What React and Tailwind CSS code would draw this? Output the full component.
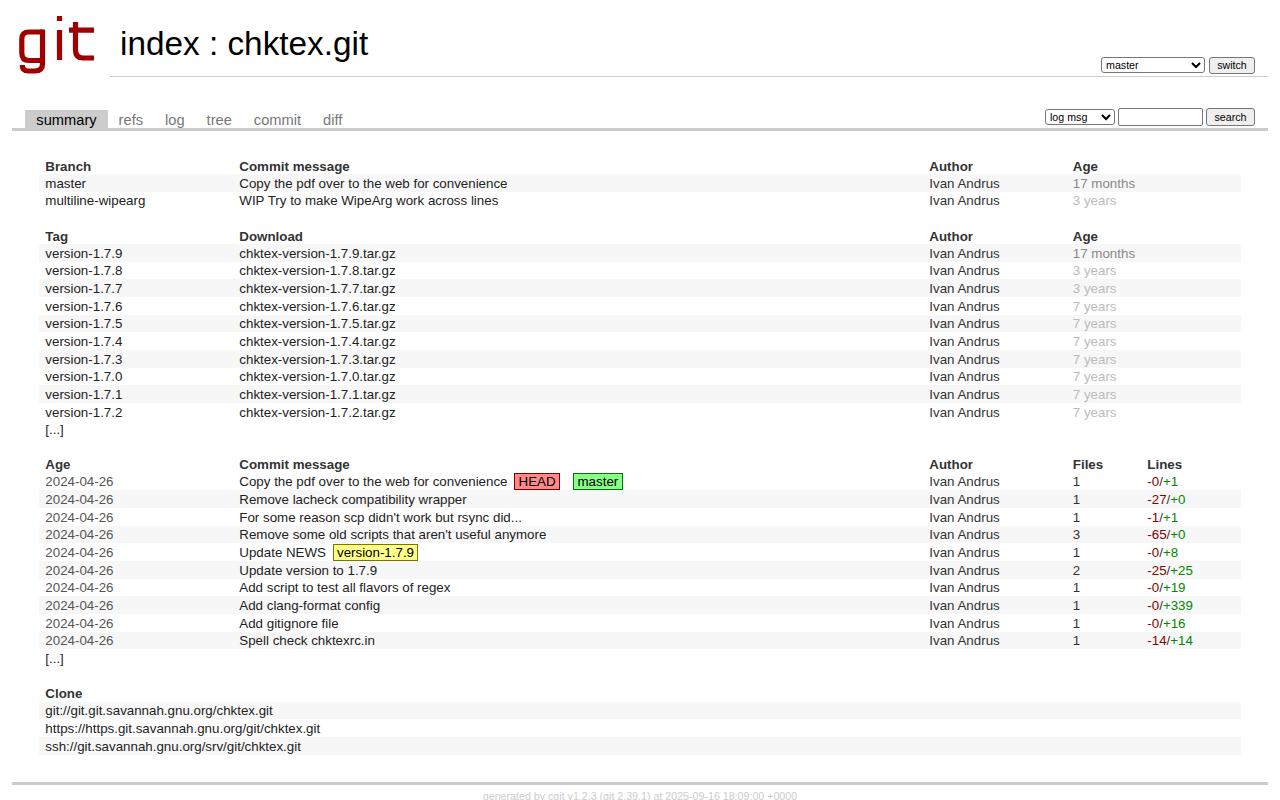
const branches = [
  ['master', 'Copy the pdf over to the web for convenience', 'Ivan Andrus', '17 months', true],
  ['multiline-wipearg', 'WIP Try to make WipeArg work across lines', 'Ivan Andrus', '3 years'],
];

const tags = [
  ['version-1.7.9', '17 months', true],
  ['version-1.7.8', '3 years'],
  ['version-1.7.7', '3 years'],
  ['version-1.7.6', '7 years'],
  ['version-1.7.5', '7 years'],
  ['version-1.7.4', '7 years'],
  ['version-1.7.3', '7 years'],
  ['version-1.7.0', '7 years'],
  ['version-1.7.1', '7 years'],
  ['version-1.7.2', '7 years'],
];

const commits = [
  ['Copy the pdf over to the web for convenience', 1, 0, 1, 'head'],
  ['Remove lacheck compatibility wrapper', 1, 27, 0],
  ["For some reason scp didn't work but rsync did...", 1, 1, 1],
  ["Remove some old scripts that aren't useful anymore", 3, 65, 0],
  ['Update NEWS', 1, 0, 8, 'tag'],
  ['Update version to 1.7.9', 2, 25, 25],
  ['Add script to test all flavors of regex', 1, 0, 19],
  ['Add clang-format config', 1, 0, 339],
  ['Add gitignore file', 1, 0, 16],
  ['Spell check chktexrc.in', 1, 14, 14],
];

const clones = [
  'git://git.git.savannah.gnu.org/chktex.git',
  'https://https.git.savannah.gnu.org/git/chktex.git',
  'ssh://git.savannah.gnu.org/srv/git/chktex.git',
];

const Th = ({ children, className = '' }) => (
  <th className={`px-[6.67px] pt-[1.67px] pb-[0.33px] text-left font-bold text-[#333] ${className}`}>{children}</th>
);

const Td = ({ children, className = '' }) => (
  <td className={`px-[6.67px] pt-[1.67px] pb-[1px] ${className}`}>{children}</td>
);

const Deco = ({ children, className }) => (
  <span className={`mx-[6.67px] border border-solid px-[3.33px] py-0 text-black ${className}`}>{children}</span>
);

const Spacer = () => (
  <tr className="h-[17.67px]"><td colSpan="5" /></tr>
);

const Logo = () => (
  <svg width="90" height="72" viewBox="10 8 90 72" className="block" fill="none" stroke="#a00000" strokeWidth="5.2">
    <path d="M42.5 32H29Q21.8 32 21.8 39V53Q21.8 60.5 29 60.5H42.5" />
    <path d="M42.5 29.5V64Q42.5 71 35 71H28Q22.3 71 22.3 65" />
    <path d="M59.5 30V60M59.5 16V21" />
    <path d="M75.5 22V50Q75.5 58 83 58H94M69 30.2H94" />
  </svg>
);

export default function App() {
  return (
    <div className="bg-white font-['Liberation_Sans',Arial,sans-serif] text-[13.33px] leading-[15px] text-[#333]">
      <div className="px-[12px]">
        <div className="flex h-[108px]">
          <div className="w-[98px] shrink-0 pt-[8px]">
            <div className="-ml-[2px]">
              <Logo />
            </div>
          </div>
          <div className="flex h-[77px] flex-1 items-start justify-between border-b border-solid border-[#ccc]">
            <div className="pt-[23px] pl-[10px] text-[33.33px] leading-[42px] text-black">
              index : chktex.git
            </div>
            <div className="flex items-start gap-1 pt-[57px] pr-[13px]">
              <select className="h-[16px] w-[104px] rounded-[3px] border border-solid border-[#767676] bg-white text-[10.67px] leading-none text-black">
                <option>master</option>
              </select>
              <button className="h-[17px] w-[46px] rounded-[3px] border border-solid border-[#767676] bg-[#efefef] text-center text-[10.67px] leading-none text-black">switch</button>
            </div>
          </div>
        </div>

        <div className="flex h-[23px] items-end justify-between border-b-[3px] border-solid border-[#ccc] pl-[13.33px]">
          <div className="flex text-[14.67px] text-[#777]">
            <span className="h-[18px] bg-[#ccc] px-[11px] leading-[20px] text-black">summary</span>
            <span className="h-[18px] px-[11px] leading-[20px]">refs</span>
            <span className="h-[18px] px-[11px] leading-[20px]">log</span>
            <span className="h-[18px] px-[11px] leading-[20px]">tree</span>
            <span className="h-[18px] px-[11px] leading-[20px]">commit</span>
            <span className="h-[18px] px-[11px] leading-[20px]">diff</span>
          </div>
          <div className="flex items-center gap-[3px] self-start pr-[13px]">
            <select className="h-[16px] w-[70px] rounded-[3px] border border-solid border-[#767676] bg-white text-[10.67px] leading-none text-black">
              <option>log msg</option>
            </select>
            <input className="h-[18px] w-[85px] rounded-[2px] border border-solid border-[#767676] bg-white" />
            <button className="h-[18px] w-[49px] rounded-[3px] border border-solid border-[#767676] bg-[#efefef] text-center text-[10.67px] leading-none text-black">search</button>
          </div>
        </div>

        <div className="px-[26.67px] pt-[26px] pb-[27px]">
          <table className="w-full table-fixed border-collapse">
            <colgroup>
              <col className="w-[194px]" />
              <col className="w-[690px]" />
              <col className="w-[143.5px]" />
              <col className="w-[74.5px]" />
              <col />
            </colgroup>
            <tbody>
              <tr>
                <Th>Branch</Th>
                <Th>Commit message</Th>
                <Th>Author</Th>
                <Th>Age</Th>
                <Th />
              </tr>
              {branches.map(([name, msg, author, age, recent], i) => (
                <tr key={name} className={i % 2 === 0 ? 'bg-[#f7f7f7]' : ''}>
                  <Td className="text-[#222]">{name}</Td>
                  <Td className="text-[#222]">{msg}</Td>
                  <Td>{author}</Td>
                  <Td className={`whitespace-nowrap ${recent ? 'text-[#888]' : 'text-[#bbb]'}`}>{age}</Td>
                  <Td />
                </tr>
              ))}
              <Spacer />
              <tr>
                <Th>Tag</Th>
                <Th>Download</Th>
                <Th>Author</Th>
                <Th>Age</Th>
                <Th />
              </tr>
              {tags.map(([name, age, recent], i) => (
                <tr key={name} className={i % 2 === 0 ? 'bg-[#f7f7f7]' : ''}>
                  <Td className="text-[#222]">{name}</Td>
                  <Td className="text-[#222]">{name.replace('version-', 'chktex-version-')}.tar.gz</Td>
                  <Td>Ivan Andrus</Td>
                  <Td className={`whitespace-nowrap ${recent ? 'text-[#888]' : 'text-[#bbb]'}`}>{age}</Td>
                  <Td />
                </tr>
              ))}
              <tr><Td className="text-[#222]">[...]</Td><td colSpan="4" /></tr>
              <Spacer />
              <tr>
                <Th>Age</Th>
                <Th>Commit message</Th>
                <Th>Author</Th>
                <Th>Files</Th>
                <Th>Lines</Th>
              </tr>
              {commits.map(([msg, files, del, add, deco], i) => (
                <tr key={msg} className={i % 2 === 1 ? 'bg-[#f7f7f7]' : ''}>
                  <Td className="text-[#555]">2024-04-26</Td>
                  <Td className="text-[#222]">
                    {msg}
                    {deco === 'head' && (
                      <>
                        <Deco className="border-[#770000] bg-[#ff8888]">HEAD</Deco>
                        <Deco className="border-[#007700] bg-[#88ff88]">master</Deco>
                      </>
                    )}
                    {deco === 'tag' && <Deco className="border-[#777700] bg-[#ffff88]">version-1.7.9</Deco>}
                  </Td>
                  <Td>Ivan Andrus</Td>
                  <Td>{files}</Td>
                  <Td>
                    <span className="text-[#880000]">-{del}</span>/<span className="text-[#008800]">+{add}</span>
                  </Td>
                </tr>
              ))}
              <tr><Td className="text-[#222]">[...]</Td><td colSpan="4" /></tr>
              <Spacer />
              <tr><Th>Clone</Th><td colSpan="4" /></tr>
              {clones.map((url, i) => (
                <tr key={url} className={i % 2 === 0 ? 'bg-[#f7f7f7]' : ''}>
                  <td colSpan="5" className="px-[6.67px] pt-[1.67px] pb-[1px] text-[#222]">{url}</td>
                </tr>
              ))}
            </tbody>
          </table>
        </div>

        <div className="border-t-[3px] border-solid border-[#ccc] pt-[4px] pb-[10px] text-center text-[10.67px] text-[#ccc]">
          generated by cgit v1.2.3 (git 2.39.1) at 2025-09-16 18:09:00 +0000
        </div>
      </div>
    </div>
  );
}
